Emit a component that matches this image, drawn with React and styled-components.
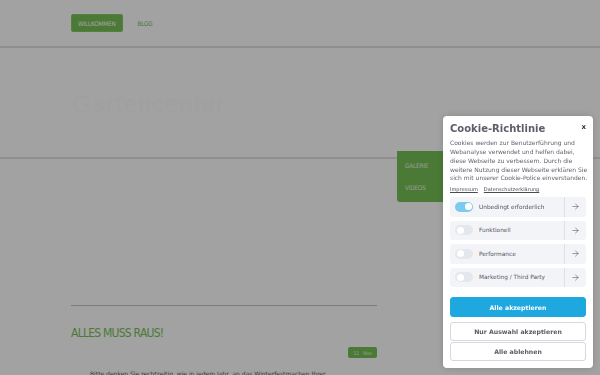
import React, { useState } from "react";
import styled, { createGlobalStyle } from "styled-components";
import { ArrowRight } from "lucide-react";

const GlobalStyle = createGlobalStyle`
  html, body {
    margin: 0;
    padding: 0;
    background: #fff;
    overflow: hidden;
  }
  body {
    font-family: "DejaVu Sans", "Liberation Sans", sans-serif;
  }
  a {
    text-decoration: none;
  }
`;

const narrow = `"DejaVu Sans Condensed", "Liberation Sans Narrow", "Liberation Sans", sans-serif`;

const Page = styled.div`
  width: 600px;
  height: 375px;
  position: relative;
  overflow: hidden;
`;

const TopBar = styled.header`
  height: 46px;
  border-bottom: 2px solid #e2e2e2;
  display: flex;
  align-items: center;
  padding-left: 71px;
  gap: 15px;
`;

const NavItem = styled.a`
  font-family: ${narrow};
  font-size: 6.3px;
  text-transform: uppercase;
  letter-spacing: -0.15px;
  color: ${(p) => (p.$active ? "#fff" : "#76c057")};
  background: ${(p) => (p.$active ? "#76c057" : "transparent")};
  border-radius: 3px;
  height: 18px;
  padding: 0 ${(p) => (p.$active ? "7px" : "0")};
  display: flex;
  align-items: center;
  box-shadow: ${(p) => (p.$active ? "inset 0 0 0 1px #84cb63" : "none")};
`;

const Hero = styled.section`
  height: 109px;
  border-bottom: 2px solid #e2e2e2;
  display: flex;
  align-items: center;
  padding-left: 73px;
  position: relative;
`;

const HeroTitle = styled.div`
  font-family: "Liberation Sans", sans-serif;
  font-weight: 300;
  font-size: 23px;
  letter-spacing: 1.5px;
  color: #fcfcfc;
  margin-top: 3px;
`;

const SubMenu = styled.div`
  position: absolute;
  left: 397px;
  top: 151px;
  width: 62px;
  background: #76c057;
  border-radius: 0 0 3px 3px;
  padding: 11px 0 11px 8px;
  display: flex;
  flex-direction: column;
  gap: 15px;
`;

const SubItem = styled.a`
  font-family: ${narrow};
  font-size: 6.3px;
  color: #eaf5e4;
  text-transform: uppercase;
  letter-spacing: -0.15px;
`;

const Main = styled.main`
  width: 306px;
  margin-left: 71px;
  padding-top: 146px;
`;

const Rule = styled.hr`
  border: 0;
  border-top: 1px solid #c4c4c4;
  margin: 0;
`;

const PostTitle = styled.h2`
  font-family: ${narrow};
  font-weight: 400;
  font-size: 12px;
  color: #76c057;
  margin: 19px 0 0;
  letter-spacing: -0.75px;
  line-height: 16px;
`;

const DateRow = styled.div`
  display: flex;
  justify-content: flex-end;
  margin-top: 6px;
`;

const DateBadge = styled.span`
  background: #76c057;
  color: #e8f3e2;
  font-family: ${narrow};
  font-size: 5px;
  border-radius: 2px;
  height: 11px;
  padding: 0 5px;
  display: flex;
  align-items: center;
  gap: 4px;
`;

const Paragraph = styled.p`
  font-size: 6px;
  color: #4f5a63;
  margin: 12px 0 0;
  padding-left: 19px;
  white-space: nowrap;
`;

const Overlay = styled.div`
  position: fixed;
  inset: 0;
  background: rgba(0, 0, 0, 0.365);
  z-index: 10;
`;

const Modal = styled.div`
  position: fixed;
  right: 7px;
  bottom: 7px;
  width: 136px;
  padding: 6px 7px 7px;
  background: #fff;
  border-radius: 4px;
  z-index: 20;
  box-shadow: 0 0 6px rgba(0, 0, 0, 0.15);
`;

const ModalHead = styled.div`
  display: flex;
  justify-content: space-between;
  align-items: flex-start;
`;

const ModalTitle = styled.h3`
  margin: 0;
  font-size: 10px;
  font-weight: 700;
  color: #5d5d68;
  line-height: 13px;
`;

const Close = styled.span`
  font-size: 7px;
  font-weight: 700;
  color: #333;
  line-height: 8px;
  margin-top: 1px;
`;

const ModalText = styled.p`
  margin: 4px 0 0;
  font-size: 6px;
  line-height: 8.7px;
  color: #62626c;
  white-space: nowrap;
`;

const Links = styled.div`
  display: flex;
  gap: 6px;
  margin-top: 3px;
`;

const ModalLink = styled.a`
  font-size: 5px;
  color: #4a4a52;
  text-decoration: underline;
`;

const Options = styled.div`
  display: flex;
  flex-direction: column;
  gap: 4px;
  margin-top: 5px;
`;

const Option = styled.div`
  display: flex;
  align-items: center;
  height: 19.5px;
  background: #f3f4f8;
  border-radius: 3px;
`;

const OptionMain = styled.label`
  flex: 1;
  display: flex;
  align-items: center;
  gap: 6px;
  padding-left: 5px;
  font-size: 5.8px;
  color: #55555f;
`;

const Toggle = styled.span`
  width: 18px;
  height: 10px;
  border-radius: 5px;
  background: ${(p) => (p.$on ? "#7ccbee" : "#e6e7ed")};
  position: relative;
  flex-shrink: 0;

  &::after {
    content: "";
    position: absolute;
    top: 1.5px;
    left: ${(p) => (p.$on ? "9.5px" : "1.5px")};
    width: 7px;
    height: 7px;
    border-radius: 50%;
    background: #fff;
  }
`;

const OptionArrow = styled.span`
  width: 21px;
  height: 100%;
  border-left: 1px solid #dfe0e6;
  display: flex;
  align-items: center;
  justify-content: center;
  color: #50505a;
`;

const Buttons = styled.div`
  display: flex;
  flex-direction: column;
  margin-top: 10px;
`;

const Btn = styled.button`
  height: ${(p) => (p.$primary ? "20px" : "19px")};
  margin-top: ${(p) => p.$gap || 0}px;
  border-radius: 3px;
  border: 1px solid ${(p) => (p.$primary ? "#1fa8e0" : "#d6d8e0")};
  background: ${(p) => (p.$primary ? "#1fa8e0" : "#fff")};
  color: ${(p) => (p.$primary ? "#fff" : "#5a5a64")};
  font-family: "DejaVu Sans", sans-serif;
  font-size: 6.2px;
  font-weight: 700;
  padding: 0;
  cursor: pointer;
`;

const options = [
  { label: "Unbedingt erforderlich", on: true },
  { label: "Funktionell", on: false },
  { label: "Performance", on: false },
  { label: "Marketing / Third Party", on: false },
];

export default function App() {
  const [open] = useState(true);

  return (
    <Page>
      <GlobalStyle />
      <TopBar>
        <NavItem $active>Willkommen</NavItem>
        <NavItem>Blog</NavItem>
      </TopBar>
      <Hero>
        <HeroTitle>Gartencenter</HeroTitle>
      </Hero>
      <SubMenu>
        <SubItem>Galerie</SubItem>
        <SubItem>Videos</SubItem>
      </SubMenu>
      <Main>
        <Rule />
        <PostTitle>ALLES MUSS RAUS!</PostTitle>
        <DateRow>
          <DateBadge>
            <span>11</span>
            <span>Nov</span>
          </DateBadge>
        </DateRow>
        <Paragraph>
          Bitte denken Sie rechtzeitig, wie in jedem Jahr, an das Winterfestmachen Ihrer
        </Paragraph>
      </Main>

      {open && (
        <>
          <Overlay />
          <Modal>
            <ModalHead>
              <ModalTitle>Cookie-Richtlinie</ModalTitle>
              <Close>x</Close>
            </ModalHead>
            <ModalText>
              Cookies werden zur Benutzerführung und
              <br />
              Webanalyse verwendet und helfen dabei,
              <br />
              diese Webseite zu verbessern. Durch die
              <br />
              weitere Nutzung dieser Webseite erklären Sie
              <br />
              sich mit unserer Cookie-Police einverstanden.
            </ModalText>
            <Links>
              <ModalLink>Impressum</ModalLink>
              <ModalLink>Datenschutzerklärung</ModalLink>
            </Links>
            <Options>
              {options.map((o) => (
                <Option key={o.label}>
                  <OptionMain>
                    <Toggle $on={o.on} />
                    {o.label}
                  </OptionMain>
                  <OptionArrow>
                    <ArrowRight size={9} strokeWidth={1.5} />
                  </OptionArrow>
                </Option>
              ))}
            </Options>
            <Buttons>
              <Btn $primary>Alle akzeptieren</Btn>
              <Btn $gap={5}>Nur Auswahl akzeptieren</Btn>
              <Btn $gap={1}>Alle ablehnen</Btn>
            </Buttons>
          </Modal>
        </>
      )}
    </Page>
  );
}
